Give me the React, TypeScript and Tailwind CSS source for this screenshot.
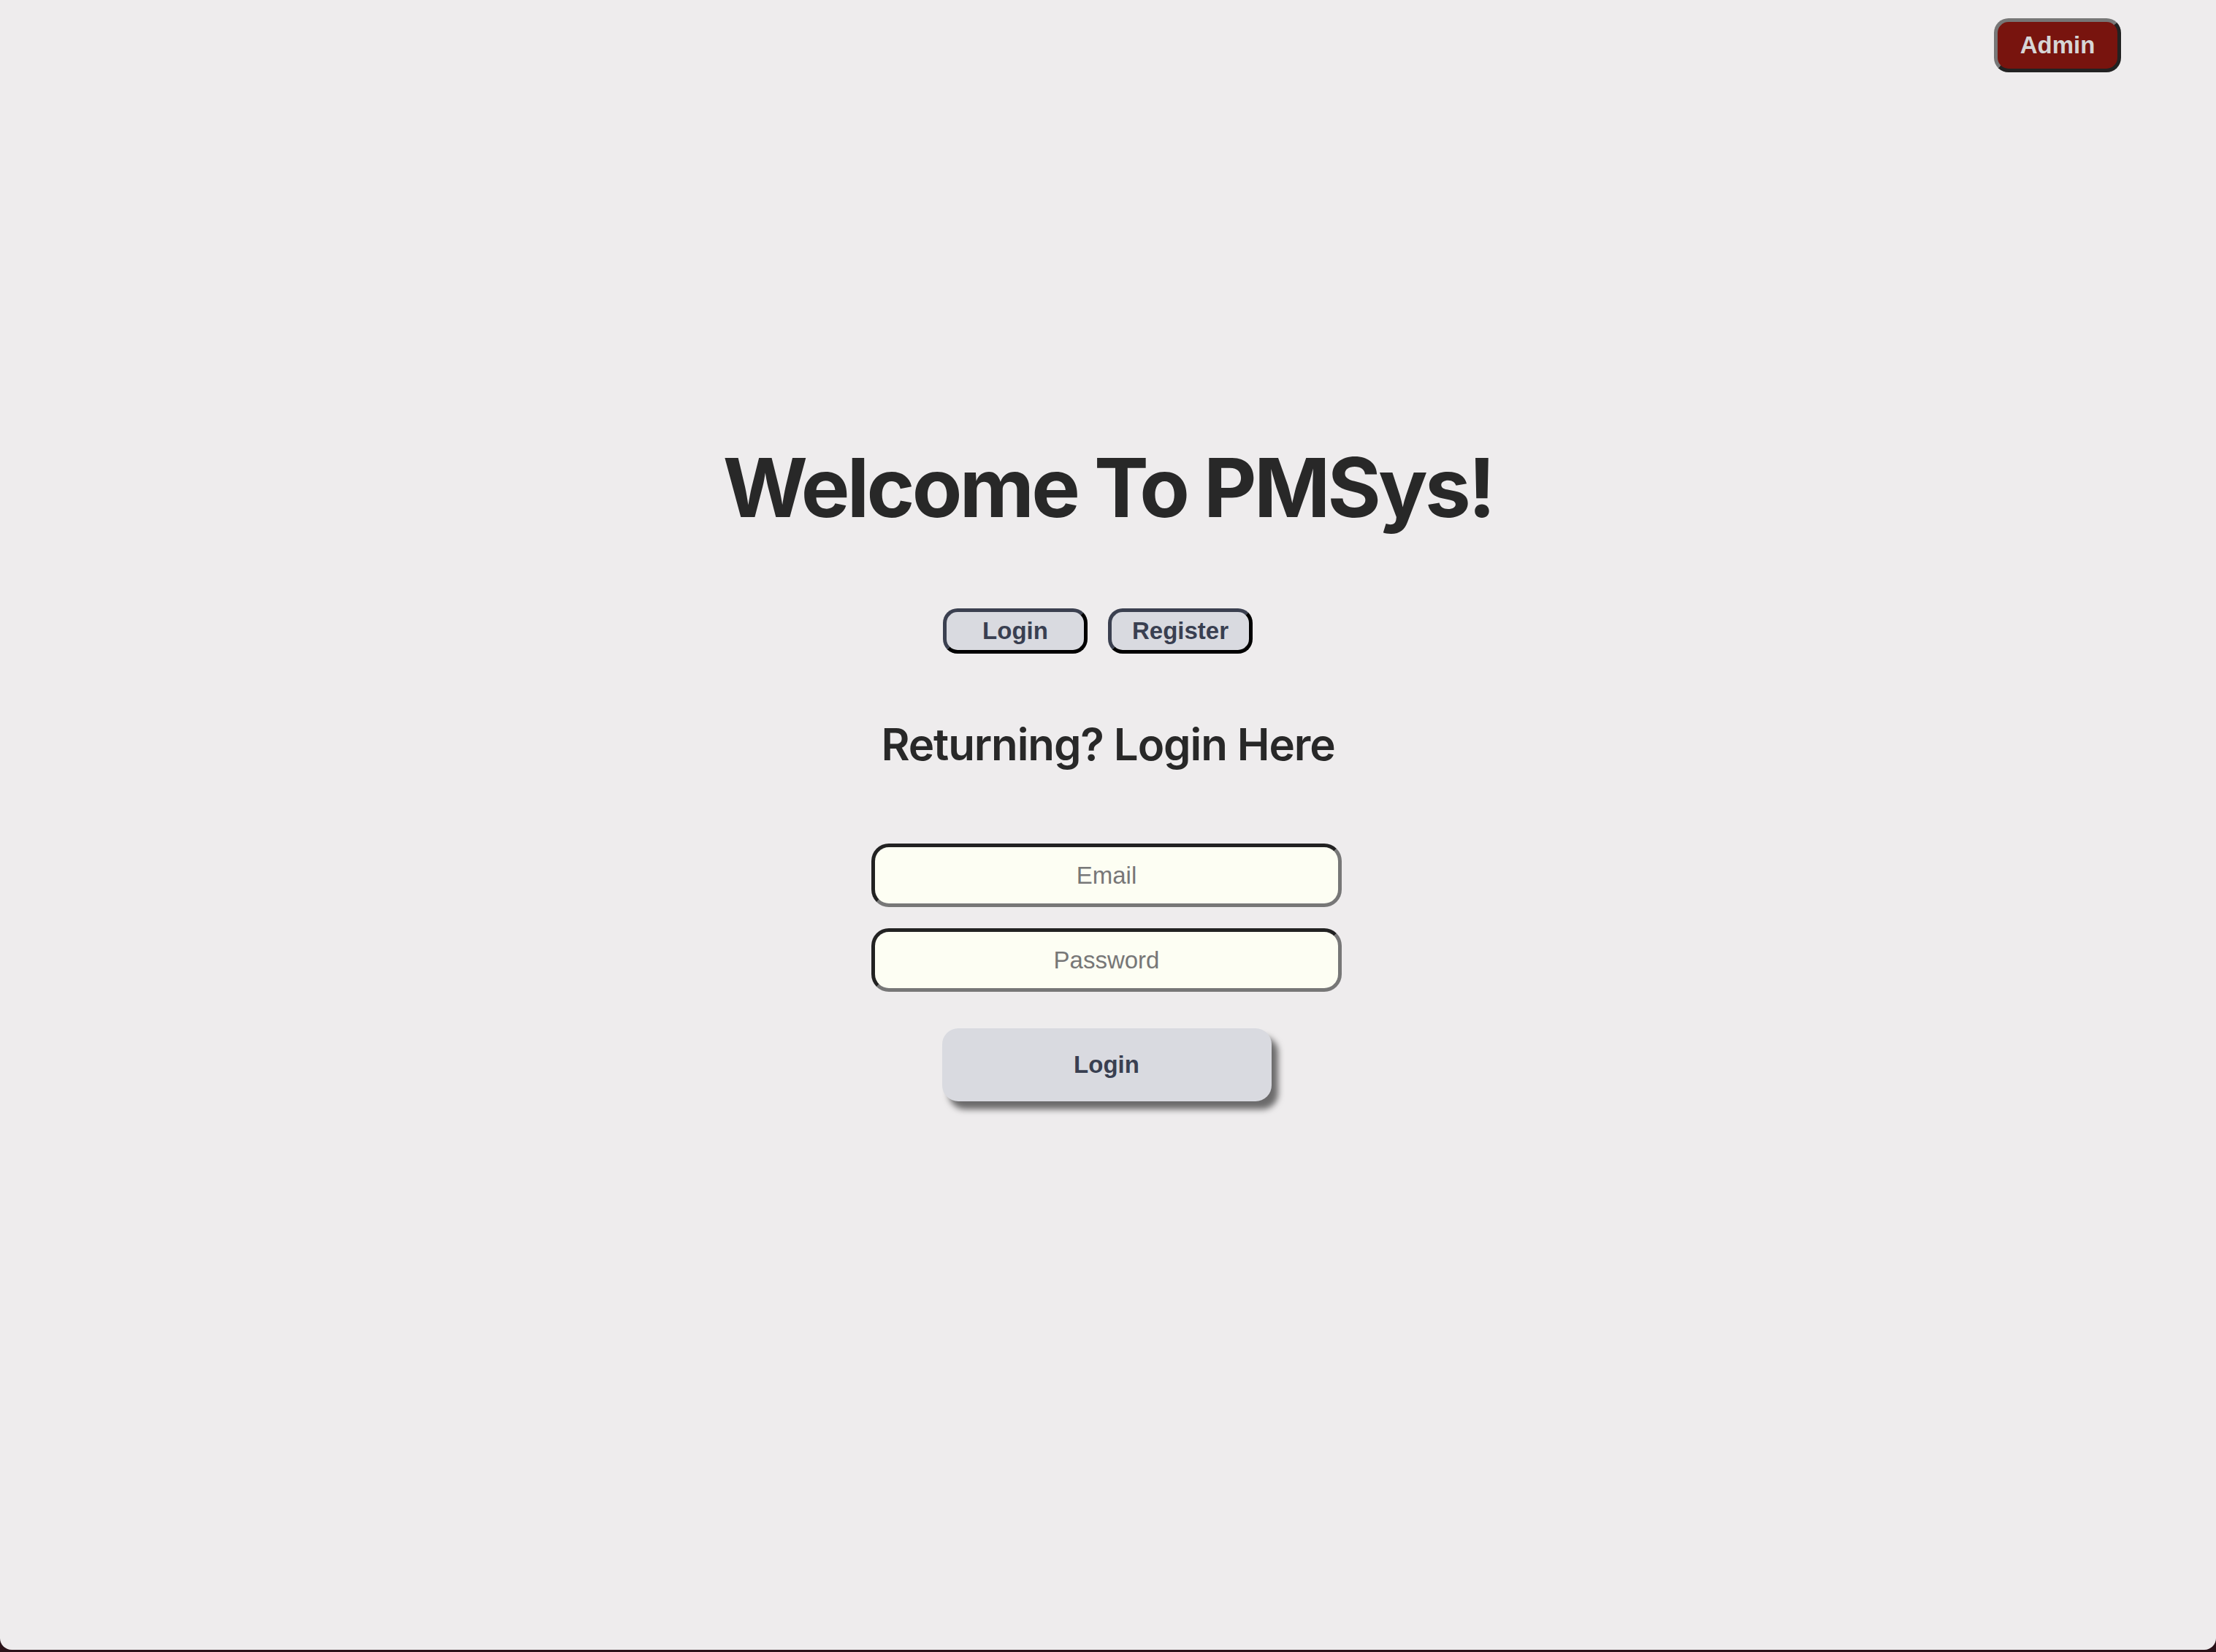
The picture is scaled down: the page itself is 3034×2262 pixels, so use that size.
import { useState } from 'react';

export default function App() {
    const [mode, setMode] = useState<'login' | 'register'>('login');

    return (
        <div className="min-h-screen bg-[#2a1219]">
            <div className="h-[2259px] rounded-b-[16px] bg-[#eeeced] flex flex-col font-['Liberation_Sans',Arial,sans-serif]">
                <div className="flex justify-end pt-[25px] pr-[130px]">
                    <button className="w-[174px] h-[74px] rounded-[20px] bg-[#78140e] text-[#d6d6d6] text-[33px] font-bold border-[5px] border-t-[#777777] border-l-[#777777] border-r-[#222222] border-b-[#222222]">
                        Admin
                    </button>
                </div>

                <main className="flex flex-col items-center">
                    <h1 className="mt-[512px] text-[112px] leading-none font-bold text-[#282828] font-['Inter',sans-serif] tracking-[-3.7px]">
                        Welcome To PMSys!
                    </h1>

                    <div className="flex mt-[110px]">
                        <button
                            onClick={() => setMode('login')}
                            className="w-[198px] h-[62px] mr-[28px] rounded-[20px] bg-[#d9dae0] text-[#393f51] text-[33px] font-bold border-[5px] border-t-[#3b4050] border-l-[#3b4050] border-r-black border-b-black"
                        >
                            Login
                        </button>
                        <button
                            onClick={() => setMode('register')}
                            className="w-[198px] h-[62px] mr-[28px] rounded-[20px] bg-[#d9dae0] text-[#393f51] text-[33px] font-bold border-[5px] border-t-[#3b4050] border-l-[#3b4050] border-r-black border-b-black"
                        >
                            Register
                        </button>
                    </div>

                    <h2 className="mt-[94px] text-[60px] leading-none font-semibold text-[#282828] font-['Inter',sans-serif] tracking-[-1.1px]">
                        {mode === 'login' ? 'Returning? Login Here' : 'New? Register Here'}
                    </h2>

                    <form className="flex flex-col items-center mt-[106px] mr-[4px]" onSubmit={(e) => e.preventDefault()}>
                        <input
                            type="email"
                            placeholder="Email"
                            className="w-[644px] h-[87px] rounded-[24px] bg-[#fdfef3] text-center text-[33px] text-[#333] placeholder:text-[#777777] outline-none border-[5px] border-t-[#222222] border-l-[#222222] border-r-[#777777] border-b-[#777777]"
                        />
                        <input
                            type="password"
                            placeholder="Password"
                            className="mt-[29px] w-[644px] h-[87px] rounded-[24px] bg-[#fdfef3] text-center text-[33px] text-[#333] placeholder:text-[#777777] outline-none border-[5px] border-t-[#222222] border-l-[#222222] border-r-[#777777] border-b-[#777777]"
                        />
                        <button
                            type="submit"
                            className="mt-[50px] w-[451px] h-[100px] rounded-[22px] bg-[#d9dae0] text-[#393f51] text-[33px] font-bold shadow-[9px_11px_8px_rgba(0,0,0,0.55)]"
                        >
                            Login
                        </button>
                    </form>
                </main>
            </div>
        </div>
    );
}
